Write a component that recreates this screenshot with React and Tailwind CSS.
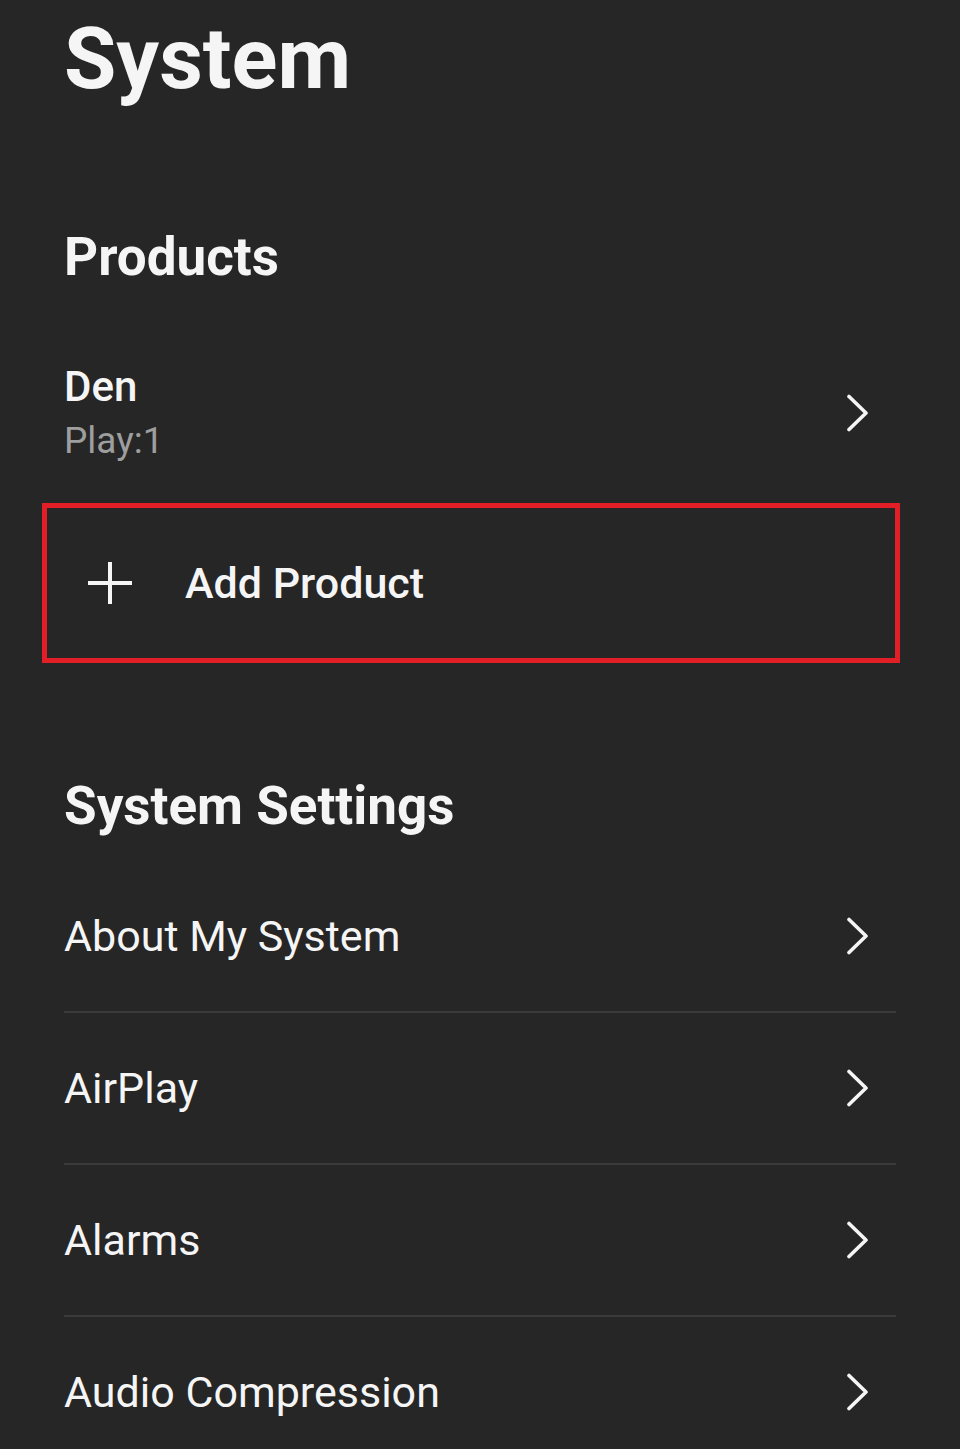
import React from "react";

function Chevron() {
  return (
    <svg width="24" height="38" viewBox="0 0 24 38" fill="none" className="shrink-0">
      <polyline points="3,2.5 20,19 3,35.5" stroke="#f5f5f5" strokeWidth="3.6" strokeLinecap="round" strokeLinejoin="round" />
    </svg>
  );
}

function Plus() {
  return (
    <svg width="46" height="46" viewBox="0 0 46 46" fill="none" className="shrink-0">
      <line x1="23" y1="2" x2="23" y2="44" stroke="#f5f5f5" strokeWidth="4" />
      <line x1="1" y1="23" x2="45" y2="23" stroke="#f5f5f5" strokeWidth="4" />
    </svg>
  );
}

function Row({ label, last }) {
  return (
    <div>
      <div className="h-[150px] flex items-center justify-between pr-[26px]">
        <span className="text-[43px] leading-none font-normal text-[#f5f5f5]">{label}</span>
        <Chevron />
      </div>
      {!last && <div className="h-[2px] bg-[#3a3a3a]" />}
    </div>
  );
}

export default function App() {
  return (
    <div
      className="w-[960px] h-[1449px] overflow-hidden bg-[#262626] text-[#f5f5f5]"
      style={{ fontFamily: "Roboto, 'Liberation Sans', sans-serif" }}
    >
      <div className="h-[118px] flex items-center pl-[64px]">
        <h1 className="text-[85px] leading-none font-bold">System</h1>
      </div>
      <div className="h-[80px] mt-[99px] flex items-center pl-[64px]">
        <h2 className="text-[53px] leading-none font-bold">Products</h2>
      </div>
      <div className="pt-[69px] pl-[64px] pr-[90px] flex items-center justify-between">
        <div className="flex flex-col gap-[14px]">
          <span className="text-[42px] leading-none font-medium">Den</span>
          <span className="text-[37px] leading-none font-normal text-[#9e9e9e]">Play:1</span>
        </div>
        <Chevron />
      </div>
      <div className="mt-[44px] ml-[42px] w-[858px] h-[160px] border-[5px] border-[#e21e26] flex items-center pl-[40px]">
        <Plus />
        <span className="ml-[52px] text-[43px] leading-none font-medium">Add Product</span>
      </div>
      <div className="mt-[113px] h-[60px] flex items-center pl-[64px]">
        <h2 className="text-[53px] leading-none font-bold">System Settings</h2>
      </div>
      <div className="mt-[25px] ml-[64px] w-[832px]">
        <Row label="About My System" />
        <Row label="AirPlay" />
        <Row label="Alarms" />
        <Row label="Audio Compression" last />
      </div>
    </div>
  );
}
